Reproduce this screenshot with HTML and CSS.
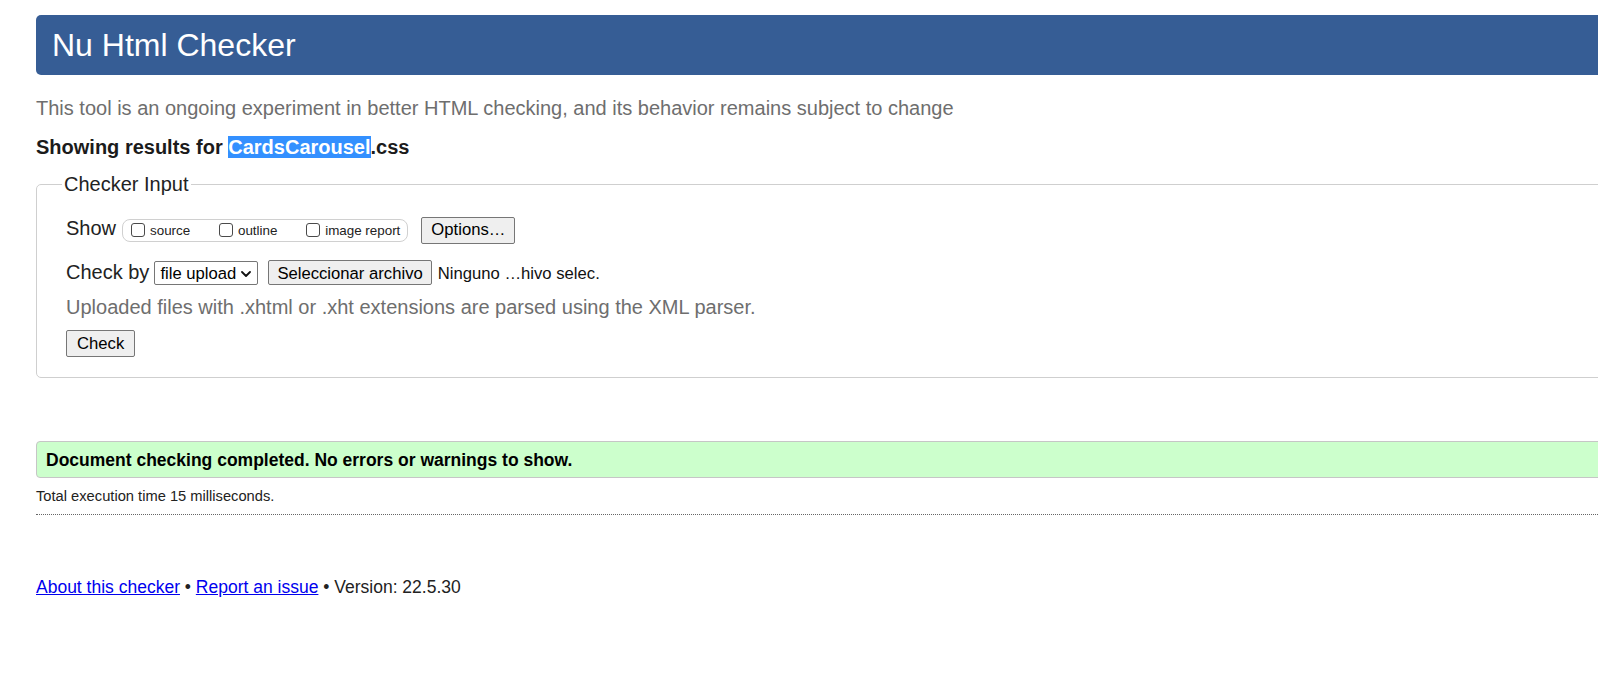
FILE: index.html
```html
<!DOCTYPE html>
<html lang="en">
<head>
<meta charset="utf-8">
<title>Showing results for CardsCarousel.css - Nu Html Checker</title>
<link rel="stylesheet" href="styles.css">
</head>
<body>
<div class="page">
  <h1 class="title">Nu Html Checker</h1>
  <p class="subtitle">This tool is an ongoing experiment in better HTML checking, and its behavior remains subject to change</p>
  <p class="results">Showing results for <span class="sel">CardsCarousel</span>.css</p>

  <fieldset class="input">
    <legend class="legend">Checker Input</legend>
    <div class="row row-show">
      <span class="lbl">Show</span>
      <span class="group">
        <label class="opt"><span class="cb"></span>source</label>
        <label class="opt"><span class="cb"></span>outline</label>
        <label class="opt opt-last"><span class="cb"></span>image report</label>
      </span>
      <button class="btn btn-options" type="button">Options…</button>
    </div>
    <div class="row row-check">
      <span class="lbl">Check by</span>
      <span class="select">
        <span class="select-text">file upload</span>
        <svg class="chev" width="10" height="6" viewBox="0 0 10 6"><path d="M1 1 L5 5 L9 1" fill="none" stroke="#111" stroke-width="1.8" stroke-linecap="round" stroke-linejoin="round"/></svg>
      </span>
      <button class="btn btn-file" type="button">Seleccionar archivo</button>
      <span class="file-name">Ninguno …hivo selec.</span>
    </div>
    <p class="hint">Uploaded files with .xhtml or .xht extensions are parsed using the XML parser.</p>
    <div class="row row-submit">
      <button class="btn btn-check" type="button">Check</button>
    </div>
  </fieldset>

  <div class="success">Document checking completed. No errors or warnings to show.</div>
  <div class="meta">Total execution time 15 milliseconds.</div>

  <p class="footer"><a href="#" class="link">About this checker</a> • <a href="#" class="link">Report an issue</a> • Version: 22.5.30</p>
</div>
</body>
</html>
```

FILE: styles.css
```css
html {
  overflow: hidden;
  background: #fff;
}

body {
  margin: 0;
  padding: 0 0 0 36px;
  font-family: "Liberation Sans", Arial, Helvetica, sans-serif;
  color: #222;
  background: #fff;
}

.page {
  width: 1640px;
}

.title {
  margin: 15px 0 0;
  height: 60px;
  padding: 0 0 0 16px;
  background: #365d95;
  color: #fff;
  font-size: 32px;
  font-weight: normal;
  line-height: 60px;
  border-radius: 5px;
}

.subtitle {
  margin: 22px 0 0;
  font-size: 20px;
  line-height: 23px;
  color: #6e6e6e;
}

.results {
  margin: 16px 0 0;
  font-size: 20px;
  line-height: 23px;
  font-weight: bold;
  color: #1b1b1b;
}

.sel {
  background: #3390ff;
  color: #fff;
}

.input {
  margin: 14px 0 0;
  padding: 21px 0 20px 29px;
  border: 1px solid #cfcfcf;
  border-radius: 5px;
  min-width: 0;
}

.legend {
  margin-left: -4px;
  padding: 0 2px;
  font-size: 20px;
  line-height: 23px;
  color: #222;
}

.row {
  display: flex;
  align-items: baseline;
}

.lbl {
  font-size: 20px;
  line-height: 23px;
}

.group {
  display: inline-block;
  margin-left: 6px;
  padding: 2px 7px 2px 8px;
  border: 1px solid #d0d0d0;
  border-radius: 8px;
  font-size: 13.4px;
  line-height: 17px;
  white-space: nowrap;
}

.opt {
  margin-right: 25px;
}

.opt-last {
  margin-right: 0;
}

.cb {
  display: inline-block;
  width: 12px;
  height: 12px;
  margin-right: 5px;
  border: 1px solid #4a4a4a;
  border-radius: 3px;
  background: #fff;
  vertical-align: -1.5px;
}

.btn {
  font-family: "Liberation Sans", Arial, Helvetica, sans-serif;
  font-size: 16.67px;
  line-height: 19px;
  color: #000;
  background: #efefef;
  border: 1px solid #767676;
  border-radius: 2px;
  margin: 0;
}

.btn-options {
  margin-left: 13px;
  padding: 2px 9px 4px;
}

.row-check {
  margin-top: 16px;
}

.select {
  display: inline-flex;
  align-items: baseline;
  justify-content: space-between;
  box-sizing: border-box;
  width: 104px;
  margin-left: 5px;
  padding: 2px 6px 1px 5px;
  border: 1px solid #767676;
  border-radius: 2px;
  background: #fff;
  font-size: 16.67px;
  line-height: 19px;
  color: #000;
}

.chev {
  align-self: center;
  margin-top: 1px;
}

.btn-file {
  margin-left: 10px;
  padding: 3px 8px 1px;
}

.file-name {
  margin-left: 6px;
  font-size: 16.67px;
  line-height: 19px;
  color: #111;
}

.hint {
  margin: 11px 0 0;
  font-size: 20px;
  line-height: 23px;
  color: #6e6e6e;
}

.row-submit {
  margin-top: 11px;
}

.btn-check {
  padding: 3px 10px 3px;
}

.success {
  margin-top: 63px;
  padding: 7.5px 9px;
  border: 1px solid #c6c6c6;
  border-radius: 4px;
  background: #ccffcc;
  font-size: 17.5px;
  line-height: 20px;
  font-weight: bold;
  color: #000;
}

.meta {
  margin-top: 9.5px;
  padding-bottom: 9.5px;
  border-bottom: 1px dotted #666;
  font-size: 14.7px;
  line-height: 17px;
  color: #222;
}

.footer {
  margin: 61.5px 0 0;
  font-size: 17.5px;
  line-height: 20px;
  color: #222;
}

.link {
  color: #0000ee;
  text-decoration: underline;
}
```
